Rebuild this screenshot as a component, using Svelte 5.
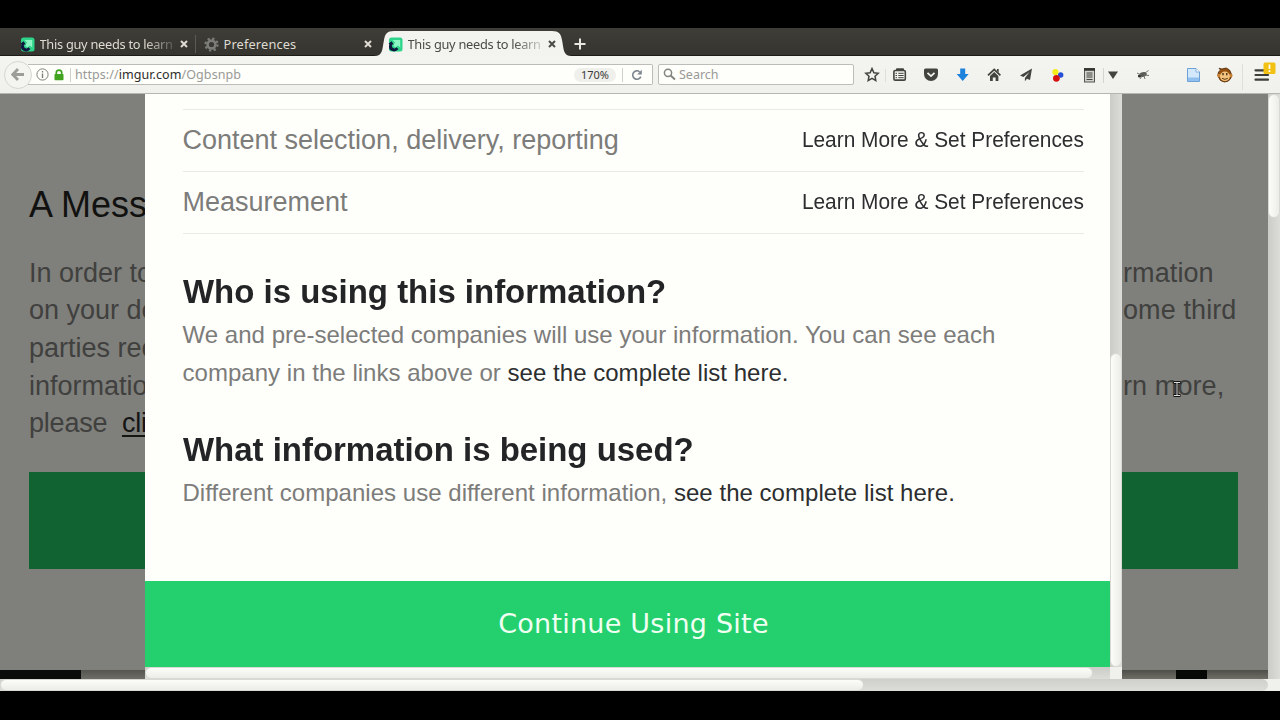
<script>
  const tabs = [
    { title: 'This guy needs to learn', icon: 'imgur', active: false },
    { title: 'Preferences', icon: 'gear', active: false },
    { title: 'This guy needs to learn', icon: 'imgur', active: true }
  ];

  const purposes = ['Content selection, delivery, reporting', 'Measurement'];

  const leftLines = ['In order to', 'on your de', 'parties rec', 'informatio'];
  const rightLines = ['rmation', 'ome third', '', 'rn more,', ''];

  const questions = [
    {
      title: 'Who is using this information?',
      lines: [
        ['We and pre-selected companies will use your information. You can see each', ''],
        ['company in the links above or ', 'see the complete list here.']
      ]
    },
    {
      title: 'What information is being used?',
      lines: [['Different companies use different information, ', 'see the complete list here.']]
    }
  ];
</script>

<div class="screen">
  <div class="tabs">
    {#each tabs as tab, i}
      <div class="tab t{i}" class:active={tab.active}>
        {#if tab.active}
          <svg class="tab-shape" width="198" height="26" viewBox="0 0 198 26">
            <path d="M0 26C9 26 8 20 10 10C11 4 13 1 20 1H178C185 1 187 4 188 10C190 20 189 26 198 26Z" fill="#f3f3ef" />
          </svg>
        {/if}
        {#if tab.icon === 'imgur'}
          <svg class="tab-icon" width="15" height="15" viewBox="0 0 15 15">
            <rect x="1" y="0.5" width="13.5" height="14" rx="2.5" fill="#2ed489" />
            <path d="M4.5 3H12.2V10.5L9.9 8.4L7.5 10.5L5 8L7.2 5.6Z" fill="#8df5c4" />
            <path d="M.6 6.5L3.6 4.2L5.8 7.8L4 7.6C3.4 10 4.6 11.6 6.8 11.4L8.4 10.2L10.4 12C8.6 14.6 5.4 15 3 13.6C.8 12.2 .6 9.6 1.4 7.4Z" fill="#10173f" />
          </svg>
        {:else}
          <svg class="tab-icon" width="15" height="15" viewBox="0 0 15 15">
            <circle cx="7.5" cy="7.5" r="3.9" fill="none" stroke="#7c7c78" stroke-width="2.6" />
            <circle cx="7.5" cy="7.5" r="6" fill="none" stroke="#7c7c78" stroke-width="2.2" stroke-dasharray="2.3 2.41" />
          </svg>
        {/if}
        <span class="tab-title" class:fade={tab.icon === 'imgur'}>{tab.title}</span>
        <svg class="close" width="8" height="8" viewBox="0 0 8 8">
          <path d="M1 1L7 7M7 1L1 7" stroke="currentColor" stroke-width="2" />
        </svg>
      </div>
    {/each}
    <svg class="plus" width="12" height="12" viewBox="0 0 12 12">
      <path d="M6 .5V11.5M.5 6H11.5" stroke="#e8e8e2" stroke-width="2" />
    </svg>
  </div>

  <div class="toolbar">
    <div class="back">
      <svg width="14" height="13" viewBox="0 0 14 13">
        <path d="M7 1L1.8 6.5L7 12M2 6.5H13" fill="none" stroke="#9c9c98" stroke-width="2.8" />
      </svg>
    </div>
    <div class="url">
      <svg width="13" height="13" viewBox="0 0 13 13">
        <circle cx="6.5" cy="6.5" r="5.6" fill="none" stroke="#7e7e7c" stroke-width="1" />
        <path d="M6.5 5.6V10M6.5 3V4.5" stroke="#7e7e7c" stroke-width="1.4" />
      </svg>
      <svg class="lock" width="10" height="12" viewBox="0 0 10 12">
        <path d="M2.3 6V3.8A2.7 2.7 0 0 1 7.7 3.8V6" fill="none" stroke="#42a31e" stroke-width="1.7" />
        <rect x=".5" y="5" width="9" height="6.3" rx=".8" fill="#42a31e" />
      </svg>
      <span class="line"></span>
      <span class="address">https://<b>imgur.com</b>/Ogbsnpb</span>
      <span class="zoom">170%</span>
      <span class="line"></span>
      <svg class="reload" width="12" height="12" viewBox="0 0 12 12">
        <path d="M9.8 7.6A4.2 4.2 0 1 1 8.6 2.8" fill="none" stroke="#7d868f" stroke-width="1.6" />
        <path d="M10.8 .8V5.4H6.2Z" fill="#7d868f" />
      </svg>
    </div>
    <div class="search">
      <svg width="13" height="13" viewBox="0 0 13 13">
        <circle cx="5" cy="4.8" r="3.6" fill="none" stroke="#848480" stroke-width="1.5" />
        <path d="M7.6 7.5L12 11.4" stroke="#848480" stroke-width="2" />
      </svg>
      <span>Search</span>
    </div>

    <svg class="actions" width="426" height="38" viewBox="0 0 426 38">
      <!-- bookmark star -->
      <path d="M18 12.6L19.9 16.7L24.2 17.2L21 20.2L21.8 24.6L18 22.4L14.2 24.6L15 20.2L11.8 17.2L16.1 16.7Z" fill="none" stroke="#44443f" stroke-width="1.5" />
      <path d="M31.5 13V26" stroke="#dededa" />
      <!-- library -->
      <path d="M42.5 14H49.5V12.8H42.5Z" fill="#44443f" stroke="#44443f" />
      <rect x="39.9" y="14.5" width="11.4" height="9.6" rx="1.2" fill="none" stroke="#44443f" stroke-width="1.6" />
      <path d="M41.5 17.3H43M44.3 17.3H49.7M41.5 19.5H43M44.3 19.5H49.7M41.5 21.7H43M44.3 21.7H49.7" stroke="#44443f" stroke-width="1" />
      <!-- pocket -->
      <path d="M71.5 12.5H82.5Q84 12.5 84 14V18A7 7 0 0 1 70 18V14Q70 12.5 71.5 12.5Z" fill="#44443f" />
      <path d="M73.5 16.8L77 20.1L80.5 16.8" fill="none" stroke="#f3f3ef" stroke-width="1.8" />
      <!-- downloads -->
      <path d="M106.2 12.5H111.2V18H114.7L108.7 25L102.7 18H106.2Z" fill="#1d82dc" />
      <!-- home -->
      <path d="M140.2 12.3L147 18.8L145.8 20L140.2 14.7L134.6 20L133.4 18.8Z" fill="#44443f" />
      <path d="M136 19.9L140.2 16L144.4 19.9V25H141.6V21.5H138.8V25H136Z" fill="#44443f" />
      <path d="M143 13H144.7V16.5L143 15Z" fill="#44443f" />
      <!-- paper plane -->
      <path d="M178 12.5L166 19.5L169.4 21L175.5 16L170.9 22V25.2L173 22.7L176 24Z" fill="#44443f" />
      <!-- coloured balls -->
      <circle cx="201.4" cy="16" r="3.1" fill="#f4ed18" />
      <circle cx="206.7" cy="19" r="2.7" fill="#2450d8" />
      <circle cx="202.4" cy="22.3" r="3.4" fill="#d4120f" />
      <!-- reader -->
      <rect x="230.5" y="12.5" width="10" height="13.5" fill="#d2d2cf" stroke="#555550" />
      <path d="M230 13.5H241" stroke="#33332f" stroke-width="2.5" />
      <path d="M232.5 17H238.5M232.5 19H238.5M232.5 21H238.5M232.5 23.5H238.5" stroke="#44443f" stroke-width="1.2" />
      <path d="M249.5 12V27" stroke="#d4d4d0" />
      <path d="M254 15.5H264L259 23Z" fill="#44443f" />
      <!-- fly -->
      <ellipse cx="289" cy="18.5" rx="3.8" ry="2.3" transform="rotate(-15 289 18.5)" fill="#5a5b57" />
      <circle cx="285.5" cy="20" r="1.6" fill="#33332f" />
      <path d="M283 17L287 19M286 23L288 20M291 23L290 20M291 17L294.5 14.5M290 19L295 19.5" stroke="#77776f" stroke-width="1" />
      <!-- page -->
      <path d="M333.5 12.5H342L345.5 16V25.5H333.5Z" fill="#d3e8fb" stroke="#6ea2d6" />
      <path d="M334 21.5H345V25H334Z" fill="#8fc0ee" />
      <path d="M342 12.5V16H345.5" fill="#fff" stroke="#6ea2d6" stroke-width=".8" />
      <!-- monkey -->
      <path d="M365 12.2L368 13Q372.5 10.5 375.5 14Q378.5 18 377 22Q375 26 370.5 26Q365.5 25.5 364.5 21L364 18Q364 15.5 366.5 14Z" fill="#95500f" stroke="#4e2b0a" stroke-width=".8" />
      <circle cx="364.8" cy="19.5" r="1.7" fill="#c88032" />
      <circle cx="376.9" cy="19.5" r="1.7" fill="#c88032" />
      <ellipse cx="370.9" cy="20.3" rx="5" ry="4.8" fill="#f2c37c" />
      <path d="M369 17V19.3M372.8 17V19.3" stroke="#2b1908" stroke-width="1.2" />
      <path d="M368 22.3Q371 24.4 373.8 22.3" fill="none" stroke="#4e2b0a" stroke-width=".9" />
      <path d="M388.5 8V34" stroke="#dededa" />
      <!-- menu -->
      <path d="M401.5 14.3H414M401.5 19H414M401.5 23.7H414" stroke="#3d3d39" stroke-width="2.2" stroke-linecap="round" />
      <rect x="409.5" y="6.5" width="12" height="11.5" rx="1.5" fill="#f3c114" />
      <path d="M415.5 8.5V13M415.5 14.3V16" stroke="#fff" stroke-width="1.7" />
    </svg>
  </div>

  <div class="page">
    <div class="side left">
      <h1>A Mess</h1>
      {#each leftLines as line}
        <p>{line}</p>
      {/each}
      <p class="more">please&nbsp; <a href="#top">click</a></p>
      <div class="button"></div>
      <div class="strip"></div>
    </div>

    <div class="modal">
      <div class="modal-body">
        <div class="purpose first"></div>
        {#each purposes as purpose}
          <div class="purpose">
            <span>{purpose}</span>
            <span class="learn">Learn More &amp; Set Preferences</span>
          </div>
        {/each}
        {#each questions as q}
          <h2>{q.title}</h2>
          {#each q.lines as [text, link]}
            <p>{text}<span>{link}</span></p>
          {/each}
        {/each}
      </div>
      <div class="continue">Continue Using Site</div>
      <div class="track-v"><div class="thumb"></div></div>
      <div class="track-h"><div class="thumb"></div></div>
      <div class="corner"></div>
    </div>

    <div class="side right">
      <h1>&nbsp;</h1>
      {#each rightLines as line}
        <p>{line}</p>
      {/each}
      <div class="button"></div>
      <div class="strip"></div>
      <svg class="cursor" width="10" height="16" viewBox="0 0 10 16">
        <path d="M1.5 1.5H8.5M5 1.5V14.5M1.5 14.5H8.5" stroke="#111" stroke-width="3" />
        <path d="M2 1.5H8M5 1.5V14.5M2 14.5H8" stroke="#ddd" stroke-width="1" />
      </svg>
    </div>
    <div class="page-scroll"><div class="thumb"></div></div>
  </div>

  <div class="bottom-scroll">
    <div class="track"><div class="thumb"></div></div>
  </div>
</div>

<style>
  :global(body) {
    background: #000;
  }

  .screen {
    box-sizing: border-box;
    width: 1280px;
    height: 720px;
    padding-top: 28px;
    background: #000;
    overflow: hidden;
    font-family: 'Liberation Sans', Arial, sans-serif;
  }

  svg { display: block; flex: none; }
  h1, h2, p { margin: 0; font-weight: normal; white-space: nowrap; }

  .tabs {
    display: flex;
    align-items: center;
    height: 28px;
    box-sizing: border-box;
    padding: 4px 0 0 10px;
    background: linear-gradient(#3e3d37, #35342f);
    box-shadow: inset 0 -1px #1d1c19;
    font: 12.8px/24px 'Noto Sans', sans-serif;
    color: #dfdbd2;
  }

  .tab {
    position: relative;
    display: flex;
    align-items: center;
    box-sizing: border-box;
    width: 185px;
    height: 24px;
    padding-left: 10px;
  }

  .tab.t1 { border-left: 1px solid #5b5a54; padding-left: 8px; height: 18px; }
  .tab.t2 { width: 185px; padding-left: 8px; }
  .tab.active { color: #4a4a46; }
  .tab-shape { position: absolute; left: -6px; top: -2px; }
  .tab-icon { position: relative; }

  .tab-title {
    position: relative;
    width: 134px;
    margin-left: 4.5px;
    overflow: hidden;
    white-space: nowrap;
    letter-spacing: -0.28px;
  }

  .t1 .tab-title { letter-spacing: 0.15px; }

  .tab-title.fade {
    -webkit-mask-image: linear-gradient(90deg, #000 105px, rgba(0, 0, 0, 0.25) 132px);
    mask-image: linear-gradient(90deg, #000 105px, rgba(0, 0, 0, 0.25) 132px);
  }

  .close { position: relative; margin-left: 6px; }
  .plus { margin-left: 9px; }

  .toolbar {
    display: flex;
    align-items: center;
    box-sizing: border-box;
    height: 38px;
    padding-left: 4px;
    background: linear-gradient(#f4f4f0, #f0f0ec);
    border-bottom: 1px solid #b5b5b1;
    font: 12.5px/19px 'Noto Sans', sans-serif;
    color: #9a9a96;
  }

  .back {
    position: relative;
    display: flex;
    align-items: center;
    justify-content: center;
    box-sizing: border-box;
    width: 28px;
    height: 28px;
    border: 1px solid #d6d6d2;
    border-radius: 50%;
    background: #f4f4f0;
  }

  .url, .search {
    display: flex;
    align-items: center;
    box-sizing: border-box;
    height: 21px;
    background: #fefefb;
    border: 1px solid #bcbcb8;
  }

  .url {
    width: 625px;
    margin-left: -4px;
    padding-left: 8px;
    border-left: 0;
    border-radius: 0 2px 2px 0;
  }

  .lock { margin-left: 5px; }
  .line { width: 1px; height: 14px; margin-left: 6px; background: #cfcfcb; }
  .address { width: 500px; margin-left: 4px; letter-spacing: 0.08px; }
  .address b { font-weight: normal; color: #2c2c2a; }

  .zoom {
    width: 42px;
    height: 14px;
    border-radius: 7px;
    background: #efefeb;
    font-size: 11px;
    line-height: 14px;
    text-align: center;
    color: #3a3a38;
    margin-left: -1px;
  }

  .reload { margin-left: 8px; }

  .search {
    width: 196px;
    margin-left: 5px;
    padding-left: 4px;
    border-radius: 2px;
  }

  .search span { margin-left: 3px; }

  .page {
    display: grid;
    grid-template-columns: 145px 977px 146px 12px;
    height: 585px;
  }

  .side {
    position: relative;
    overflow: hidden;
    background: #7f7f7b;
    color: #40403e;
  }

  .side h1 {
    margin: 89px 0 27.5px 29px;
    font-size: 36px;
    line-height: 44px;
    color: #111110;
  }

  .side p {
    height: 37.7px;
    margin-left: 29px;
    font-size: 27px;
    line-height: 37.7px;
  }

  .side.right h1, .side.right p { margin-left: 1px; }
  .side.right p { letter-spacing: 0.1px; }
  .side p.more { letter-spacing: -0.2px; }
  .side a { color: #151514; text-underline-offset: 3px; text-decoration-thickness: 2px; }
  .side .button { height: 97px; margin: 29px 0 0 29px; background: #116432; }
  .side.right .button { margin: 29px 30px 0 0; }

  .strip {
    height: 9px;
    margin-top: 101px;
    background: linear-gradient(90deg, #0a0c0b 81px, transparent 81px), linear-gradient(#55544f, #6e6e69);
  }

  .right .strip {
    background:
      linear-gradient(90deg, transparent 54px, #070907 54px, #070907 85px, transparent 85px),
      linear-gradient(#4f4f4a, #6e6e66);
  }

  .cursor { position: absolute; left: 50px; top: 287px; }

  .modal {
    display: grid;
    grid-template-columns: 965px 12px;
    grid-template-rows: 486.5px 86px 12.5px;
    background: #fefefb;
  }

  .modal-body { padding: 0 26px 0 37.5px; }

  .purpose {
    display: flex;
    align-items: center;
    justify-content: space-between;
    box-sizing: border-box;
    height: 62px;
    border-bottom: 1px solid #e9e9e6;
    font-size: 27px;
    color: #7c7c7a;
  }

  .purpose.first { height: 16px; }

  /* tall, slightly condensed faces */
  .learn {
    padding-bottom: 2px;
    font-size: 22.5px;
    color: #2c2e2f;
    transform: scaleX(0.928);
    transform-origin: 100% 50%;
  }

  .modal h2 {
    margin: 35px 0 3px;
    font-size: 34px;
    font-weight: bold;
    line-height: 44px;
    color: #222425;
    transform: scaleX(0.969);
    transform-origin: 0 50%;
  }

  .modal p {
    font-size: 24px;
    line-height: 38px;
    letter-spacing: 0.03px;
    color: #7c7c7a;
  }

  .modal p span { color: #2c2e2f; }

  .continue {
    grid-column: 1;
    grid-row: 2;
    padding-left: 12px;
    background: #24d06e;
    color: #effff2;
    font: 27px/86px 'DejaVu Sans', sans-serif;
    letter-spacing: 0.24px;
    text-align: center;
  }

  .track-v, .page-scroll {
    grid-column: 2;
    grid-row: 1 / 3;
    box-sizing: border-box;
    background: linear-gradient(90deg, #cbccc7, #dcddd9);
  }

  .track-v { padding-top: 259px; }
  .track-h { grid-column: 1; grid-row: 3; background: linear-gradient(#cbccc7, #dcddd9); }

  .thumb {
    box-sizing: border-box;
    border: 1px solid #d8d8d4;
    border-radius: 6px;
    background: linear-gradient(90deg, #fcfdf9, #ecede8);
  }

  .track-v .thumb { height: 313.5px; }
  .track-h .thumb { width: 948px; height: 12px; background: linear-gradient(#fcfdf9, #ecede8); }
  .corner { background: #f0f0ec; }

  .page-scroll { grid-column: 4; grid-row: 1; }
  .page-scroll .thumb { height: 124px; }

  .bottom-scroll { height: 12px; background: #f0f0ec; }
  .bottom-scroll .track { width: 1268px; height: 12px; border-radius: 0 6px 6px 0; background: linear-gradient(#cfd0cb, #dcddd9); }
  .bottom-scroll .thumb { width: 864px; height: 12px; background: linear-gradient(#fcfdf9, #ecede8); }
</style>
